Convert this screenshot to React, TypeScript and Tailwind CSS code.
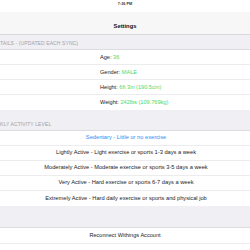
const font = "font-['Liberation_Sans',Arial,sans-serif]"

function SectionHeader({ label, height }: { label: string; height: string }) {
  return (
    <div className={`${height} bg-[#efeff4] border-b border-[#dcdce0] flex items-end pb-[3px]`}>
      <span className="whitespace-nowrap text-[5px] leading-none text-[#a2a2a8] tracking-[0.1px]">
        {label}
      </span>
    </div>
  )
}

function DetailRow({ label, value, last }: { label: string; value: string; last?: boolean }) {
  return (
    <div className={`h-[15px] bg-white flex items-center pl-[100px] pt-[1px] text-[5.6px] leading-none text-[#222] ${last ? '' : 'border-b border-[#ececef]'}`}>
      <span>{label}:&nbsp;</span>
      <span className="text-[#4cd964]">{value}</span>
    </div>
  )
}

function ActivityRow({ text, selected, last }: { text: string; selected?: boolean; last?: boolean }) {
  return (
    <div className={`h-[15px] bg-white flex items-center justify-center text-[5.7px] leading-none ${selected ? 'text-[#2a8ef5]' : 'text-[#222]'} ${last ? '' : 'border-b border-[#ececef]'}`}>
      <span className="pl-[2px]">{text}</span>
    </div>
  )
}

export default function App() {
  const details = [
    { label: 'Age', value: '36' },
    { label: 'Gender', value: 'MALE' },
    { label: 'Height', value: '6ft 3in (190.5cm)' },
    { label: 'Weight', value: '242lbs (109.769kg)' },
  ]

  const levels = [
    'Sedentary - Little or no exercise',
    'Lightly Active - Light exercise or sports 1-3 days a week',
    'Moderately Active - Moderate exercise or sports 3-5 days a week',
    'Very Active - Hard exercise or sports 6-7 days a week',
    'Extremely Active - Hard daily exercise or sports and physical job',
  ]

  return (
    <div className={`w-[250px] h-[250px] overflow-hidden bg-white ${font}`}>
      {/* status bar */}
      <div className="h-[12px] bg-white flex items-start justify-center pt-[3px]">
        <span className="text-[3.8px] font-bold text-[#333] leading-none">7:36 PM</span>
      </div>

      {/* nav bar */}
      <div className="h-[23px] bg-[#f7f7f7] border-b border-[#d8d8dc] flex items-center justify-center pt-[8px]">
        <span className="text-[5.8px] font-bold text-[#111] leading-none">Settings</span>
      </div>

      <SectionHeader label="TAILS - (UPDATED EACH SYNC)" height="h-[15px]" />
      {details.map((d, i) => (
        <DetailRow key={i} label={d.label} value={d.value} last={i === details.length - 1} />
      ))}

      <SectionHeader label="KLY ACTIVITY LEVEL" height="h-[21px]" />
      {levels.map((l, i) => (
        <ActivityRow key={i} text={l} selected={i === 0} last={i === levels.length - 1} />
      ))}

      <div className="h-[22px] bg-[#efeff4] border-b border-[#dcdce0]" />
      <div className="h-[16px] bg-white border-b border-[#ececef] flex items-center justify-center text-[5.6px] leading-none text-[#222]">
        Reconnect Withings Account
      </div>
    </div>
  )
}
